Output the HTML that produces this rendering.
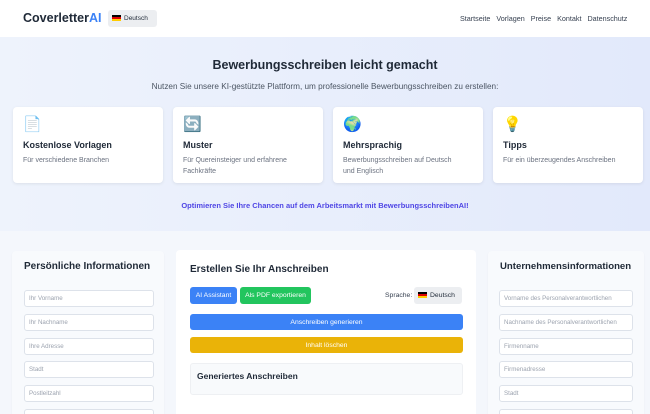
<!DOCTYPE html><html><head><meta charset="utf-8"><style>
*{box-sizing:border-box;margin:0;padding:0}
html,body{width:650px;height:414px;overflow:hidden}
body{font-family:"Liberation Sans","DejaVu Sans",sans-serif;background:#f4f7fc;color:#1f2937;position:relative}
.a{position:absolute}
.hdr{left:0;top:0;width:650px;height:37px;background:#fff}
.hero{left:0;top:37px;width:650px;height:194px;background:linear-gradient(90deg,#eef3fc,#e2e9fb)}
.card{background:#fff;border-radius:4px;box-shadow:0 1px 3px rgba(0,0,0,.08);width:150px;height:76px;top:107px}
.card .i{position:absolute;left:10px;top:8px;font-size:15px}
.card b{position:absolute;left:10px;top:33px;font-size:9px}
.card span{position:absolute;left:10px;top:48px;font-size:7px;color:#6b7280;line-height:11px;width:118px}
.panel{background:#f8fafd;border-radius:4px;box-shadow:0 1px 2px rgba(0,0,0,.04)}
.in{position:absolute;height:17px;border:1px solid #dde2ea;border-radius:3px;background:#fff;font-size:6.2px;color:#9ca3af;padding-left:4px;display:flex;align-items:center;white-space:nowrap;overflow:hidden}
.btn{position:absolute;color:#fff;font-size:6.8px;border-radius:3px;display:flex;align-items:center;justify-content:center}
</style></head><body>
<div class="a hdr"></div>
<div class="a" style="left:23px;top:11px;font-size:12.5px;font-weight:bold;color:#1f2937">Coverletter<span style="color:#3b82f6">AI</span></div>
<div class="a" style="left:108px;top:10px;width:49px;height:17px;background:#eceef1;border-radius:3px;font-size:6.5px;line-height:17px;padding-left:4px"><span style="display:inline-block;width:9px;height:6px;background:linear-gradient(#000 33%,#d00 33% 66%,#fc0 66%);vertical-align:-1px;margin-right:3px"></span>Deutsch</div>
<div class="a" style="left:460px;top:14px;font-size:7.2px;color:#374151">Startseite&nbsp;&nbsp; Vorlagen&nbsp;&nbsp; Preise&nbsp;&nbsp; Kontakt&nbsp;&nbsp; Datenschutz</div>
<div class="a hero"></div>
<div class="a" style="left:0;width:650px;top:58px;text-align:center;font-size:12.5px;font-weight:bold">Bewerbungsschreiben leicht gemacht</div>
<div class="a" style="left:0;width:650px;top:82px;text-align:center;font-size:8.2px;color:#4b5563">Nutzen Sie unsere KI-gestützte Plattform, um professionelle Bewerbungsschreiben zu erstellen:</div>
<div class="a card" style="left:13px"><div class="i">📄</div><b>Kostenlose Vorlagen</b><span>Für verschiedene Branchen</span></div>
<div class="a card" style="left:173px"><div class="i">🔄</div><b>Muster</b><span>Für Quereinsteiger und erfahrene Fachkräfte</span></div>
<div class="a card" style="left:333px"><div class="i">🌍</div><b>Mehrsprachig</b><span>Bewerbungsschreiben auf Deutsch und Englisch</span></div>
<div class="a card" style="left:493px"><div class="i">💡</div><b>Tipps</b><span>Für ein überzeugendes Anschreiben</span></div>
<div class="a" style="left:0;width:650px;top:201px;text-align:center;font-size:7.5px;font-weight:bold;color:#4f46e5">Optimieren Sie Ihre Chancen auf dem Arbeitsmarkt mit BewerbungsschreibenAI!</div>
<div class="a panel" style="left:12px;top:251px;width:152px;height:170px"></div>
<div class="a" style="left:24px;top:261px;font-size:10px;font-weight:bold">Persönliche Informationen</div>
<div class="in" style="left:24px;top:290px;width:130px">Ihr Vorname</div>
<div class="in" style="left:24px;top:314px;width:130px">Ihr Nachname</div>
<div class="in" style="left:24px;top:338px;width:130px">Ihre Adresse</div>
<div class="in" style="left:24px;top:361px;width:130px">Stadt</div>
<div class="in" style="left:24px;top:385px;width:130px">Postleitzahl</div>
<div class="in" style="left:24px;top:409px;width:130px"></div>
<div class="a" style="left:176px;top:250px;width:300px;height:170px;background:#fff;border-radius:4px"></div>
<div class="a" style="left:190px;top:264px;font-size:10px;font-weight:bold">Erstellen Sie Ihr Anschreiben</div>
<div class="btn" style="left:190px;top:287px;width:47px;height:17px;background:#3b82f6">AI Assistant</div>
<div class="btn" style="left:240px;top:287px;width:71px;height:17px;background:#22c55e">Als PDF exportieren</div>
<div class="a" style="left:385px;top:292px;font-size:6.8px;color:#374151">Sprache:</div>
<div class="a" style="left:414px;top:287px;width:48px;height:17px;background:#eceef1;border-radius:3px;font-size:6.8px;line-height:17px;padding-left:4px"><span style="display:inline-block;width:9px;height:6px;background:linear-gradient(#000 33%,#d00 33% 66%,#fc0 66%);vertical-align:-1px;margin-right:3px"></span>Deutsch</div>
<div class="btn" style="left:190px;top:314px;width:273px;height:16px;background:#3b82f6">Anschreiben generieren</div>
<div class="btn" style="left:190px;top:337px;width:273px;height:16px;background:#eab308">Inhalt löschen</div>
<div class="a" style="left:190px;top:363px;width:273px;height:32px;background:#f8fafc;border:1px solid #eef0f3;border-radius:3px"></div>
<div class="a" style="left:197px;top:371px;font-size:8.5px;font-weight:bold">Generiertes Anschreiben</div>
<div class="a panel" style="left:488px;top:251px;width:156px;height:170px"></div>
<div class="a" style="left:500px;top:261px;font-size:9.6px;font-weight:bold">Unternehmensinformationen</div>
<div class="in" style="left:499px;top:290px;width:134px">Vorname des Personalverantwortlichen</div>
<div class="in" style="left:499px;top:314px;width:134px">Nachname des Personalverantwortlichen</div>
<div class="in" style="left:499px;top:338px;width:134px">Firmenname</div>
<div class="in" style="left:499px;top:361px;width:134px">Firmenadresse</div>
<div class="in" style="left:499px;top:385px;width:134px">Stadt</div>
<div class="in" style="left:499px;top:409px;width:134px"></div>
</body></html>
